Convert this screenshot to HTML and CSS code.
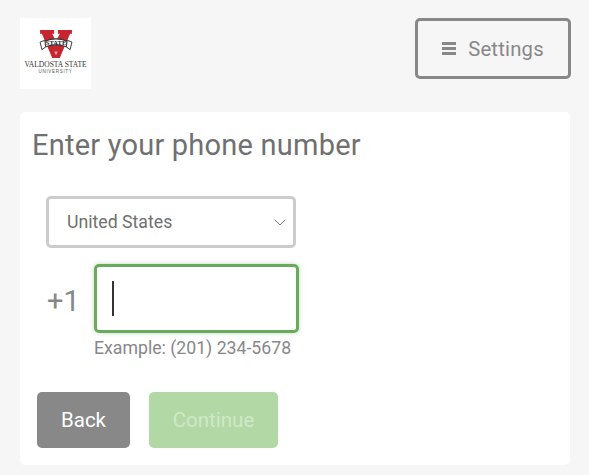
FILE: index.html
```html
<!DOCTYPE html>
<html lang="en">
<head>
<meta charset="utf-8">
<title>Enter your phone number</title>
<link rel="stylesheet" href="styles.css">
</head>
<body>
<header class="top">
  <div class="logo">
    <svg class="mark" viewBox="0 0 36 32" width="36" height="30" aria-hidden="true">
      <path d="M1 1h15v4h-2l4 8 4-8h-2V1h15v4h-2L22 31h-8L3 5H1z" fill="#c8262e"/>
      <path d="M16 24h4l-2 4z" fill="#e9a5a8"/>
      <path d="M6 13q12-5 24 0l-1 6q-11-4-22 0z" fill="#fff" stroke="#333" stroke-width="1.2"/>
      <path d="M1 14l5-2 1 7-4 3zM35 14l-5-2-1 7 4 3z" fill="#fff" stroke="#333" stroke-width="1"/>
      <text x="18" y="17.5" class="mark-text" text-anchor="middle">STATE</text>
    </svg>
    <span class="logo-name">VALDOSTA STATE</span>
    <span class="logo-sub">UNIVERSITY</span>
  </div>
  <button class="settings" type="button">
    <svg class="menu-icon" viewBox="0 0 14 13" width="14" height="13" aria-hidden="true">
      <path d="M0 0h14v3H0zM0 5h14v3H0zM0 10h14v3H0z" fill="#888"/>
    </svg>
    <span>Settings</span>
  </button>
</header>
<main class="card">
  <h1 class="title">Enter your phone number</h1>
  <div class="select">
    <span>United States</span>
    <svg class="chev" viewBox="0 0 12 7" width="12" height="7" aria-hidden="true">
      <path d="M.7.7 6 6l5.3-5.3" fill="none" stroke="#777" stroke-width="1"/>
    </svg>
  </div>
  <div class="phone-row">
    <span class="code">+1</span>
    <div class="phone-input"><i class="caret"></i></div>
  </div>
  <p class="hint">Example: (201) 234-5678</p>
  <div class="actions">
    <button class="btn back" type="button">Back</button>
    <button class="btn next" type="button">Continue</button>
  </div>
</main>
</body>
</html>
```
FILE: styles.css
```css
* { box-sizing: border-box; }
html, body { height: 100%; }
body {
  margin: 0;
  padding: 18px 18px 0 20px;
  background: #f6f6f6;
  font-family: Roboto, "Liberation Sans", sans-serif;
  color: #707070;
  overflow: hidden;
}
.top {
  display: flex;
  justify-content: space-between;
  align-items: flex-start;
  height: 94px;
}
.logo {
  width: 71px;
  height: 71px;
  background: #fff;
  display: flex;
  flex-direction: column;
  align-items: center;
  padding-top: 11px;
  color: #333;
}
.mark { display: block; }
.mark-text { font: 700 7px "Liberation Serif", serif; fill: #222; }
.logo-name {
  font: 7.5px/8px "Liberation Serif", serif;
  white-space: nowrap;
  margin-top: 2px;
}
.logo-sub {
  font: 4.5px/5px "Liberation Sans", sans-serif;
  letter-spacing: .7px;
  color: #555;
}
.settings {
  width: 156px;
  height: 61px;
  border: 3px solid #888;
  border-radius: 5px;
  background: transparent;
  display: flex;
  align-items: center;
  justify-content: center;
  gap: 12px;
  font: 20.3px Roboto, sans-serif;
  letter-spacing: .2px;
  color: #888;
  padding: 0;
}
.card {
  width: 550px;
  height: 353px;
  background: #fff;
  border-radius: 5px;
  padding: 15px 12px 0 12px;
}
.title {
  margin: 0;
  font: 400 29px/36px Roboto, sans-serif;
  color: #707070;
  letter-spacing: .22px;
}
.select {
  margin: 33px 0 0 14px;
  width: 250px;
  height: 52px;
  border: 3px solid #ccc;
  border-radius: 5px;
  display: flex;
  align-items: center;
  justify-content: space-between;
  padding: 0 7px 0 18px;
  font-size: 17.7px;
  color: #707070;
}
.phone-row {
  display: flex;
  align-items: center;
  margin: 16px 0 0 15px;
  gap: 14px;
}
.code { font-size: 29px; color: #888; width: 33px; padding-top: 4px; }
.phone-input {
  width: 205px;
  height: 69px;
  border: 3px solid #6aaa5c;
  border-radius: 5px;
  box-shadow: 0 0 4px rgba(106, 170, 92, .45);
  display: flex;
  align-items: center;
  padding-left: 15px;
}
.caret { width: 2px; height: 35px; background: #333; }
.hint {
  margin: 5px 0 0 62px;
  font-size: 17.7px;
  line-height: 20px;
  color: #888;
}
.actions {
  display: flex;
  gap: 19px;
  margin: 34px 0 0 5px;
}
.btn {
  height: 56px;
  border: 0;
  border-radius: 5px;
  font: 20.5px Roboto, sans-serif;
  padding: 0;
}
.back { width: 93px; background: #888; color: #fff; }
.next { width: 129px; background: #b2d8a6; color: #cfe8c8; }
```
